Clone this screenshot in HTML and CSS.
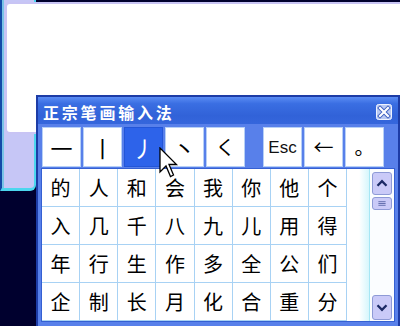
FILE: index.html
```html
<!DOCTYPE html>
<html lang="zh-CN">
<head>
<meta charset="utf-8">
<title>正宗笔画输入法</title>
<link rel="stylesheet" href="styles.css">
</head>
<body>
<div class="desk">
  <div class="back-panel"></div>
  <div class="back-sheet"></div>

  <div class="ime">
    <div class="titlebar">
      <span class="title">正宗笔画输入法</span>
      <span class="close">
        <svg width="16" height="16" viewBox="0 0 16 16">
          <rect x="0.5" y="0.5" width="15" height="15" rx="2" fill="#b9c9f2" stroke="#eef3ff"/>
          <path d="M4 4 L12 12 M12 4 L4 12" stroke="#3d5fc0" stroke-width="4" stroke-linecap="square"/>
          <path d="M4 4 L12 12 M12 4 L4 12" stroke="#ffffff" stroke-width="2.2" stroke-linecap="square"/>
        </svg>
      </span>
    </div>

    <div class="keys">
      <div class="keygroup">
        <div class="key">一</div>
        <div class="key">丨</div>
        <div class="key active">丿</div>
        <div class="key">丶</div>
        <div class="key narrow">く</div>
      </div>
      <div class="keygroup">
        <div class="key esc">Esc</div>
        <div class="key arrow">←</div>
        <div class="key stop">。</div>
      </div>
    </div>

    <div class="list">
      <div class="grid">
        <div class="cell">的</div><div class="cell">人</div><div class="cell">和</div><div class="cell">会</div><div class="cell">我</div><div class="cell">你</div><div class="cell">他</div><div class="cell">个</div>
        <div class="cell">入</div><div class="cell">几</div><div class="cell">千</div><div class="cell">八</div><div class="cell">九</div><div class="cell">儿</div><div class="cell">用</div><div class="cell">得</div>
        <div class="cell">年</div><div class="cell">行</div><div class="cell">生</div><div class="cell">作</div><div class="cell">多</div><div class="cell">全</div><div class="cell">公</div><div class="cell">们</div>
        <div class="cell">企</div><div class="cell">制</div><div class="cell">长</div><div class="cell">月</div><div class="cell">化</div><div class="cell">合</div><div class="cell">重</div><div class="cell">分</div>
      </div>
      <div class="side"></div>
      <div class="scroll">
        <div class="sbtn up">
          <svg width="20" height="21" viewBox="0 0 20 21"><path d="M5 13 L10 8 L15 13" fill="none" stroke="#1c2a66" stroke-width="2.6"/></svg>
        </div>
        <div class="thumb">
          <svg width="20" height="11" viewBox="0 0 20 11"><path d="M6 3.5 H14 M6 5.5 H14 M6 7.5 H14" stroke="#5a66a8" stroke-width="1"/></svg>
        </div>
        <div class="track"></div>
        <div class="sbtn down">
          <svg width="20" height="23" viewBox="0 0 20 23"><path d="M5 9 L10 14 L15 9" fill="none" stroke="#1c2a66" stroke-width="2.6"/></svg>
        </div>
      </div>
    </div>
  </div>

  <svg class="cursor" width="20" height="32" viewBox="0 0 20 32">
    <path d="M1 1 L1 25 L7 19 L11.5 29.5 L14.5 28 L10 17.5 L17.5 17.5 Z" fill="#ffffff" stroke="#000000" stroke-width="1.3" stroke-linejoin="miter"/>
  </svg>
</div>
</body>
</html>
```

FILE: styles.css
```css
html, body {
  margin: 0;
  padding: 0;
}

body {
  background: #00002e;
  width: 400px;
  height: 326px;
  overflow: hidden;
  font-family: "Noto Sans CJK SC", "Noto Sans", sans-serif;
}

.desk {
  position: relative;
  width: 400px;
  height: 326px;
  overflow: hidden;
}

/* window behind the IME */
.back-panel {
  position: absolute;
  left: 0;
  top: 0;
  width: 36px;
  height: 191px;
  box-sizing: border-box;
  background: #c6c6f6;
  border-left: 2px solid #134aa8;
  box-shadow: inset 2px 0 0 #78c4e6;
  border-bottom: 3px solid #4cd6ee;
  border-right: 2px solid #4cd6ee;
  border-bottom-right-radius: 6px;
}

.back-sheet {
  position: absolute;
  left: 5px;
  top: 2px;
  width: 420px;
  height: 132px;
  box-sizing: border-box;
  background: #ffffff;
  border: 2px solid #c8c4f4;
  border-radius: 5px;
}

/* IME window */
.ime {
  position: absolute;
  left: 36px;
  top: 95px;
  width: 364px;
  height: 240px;
  box-sizing: border-box;
  background: #5880ea;
  border: 2px solid #1d3ca6;
  display: flex;
  flex-direction: column;
}

.titlebar {
  height: 27px;
  box-sizing: border-box;
  padding: 2px 6px 0 5px;
  background: linear-gradient(#5a8cf4 0%, #3a6ee2 25%, #3162d8 70%, #3566dc 100%);
  display: flex;
  align-items: center;
  justify-content: space-between;
}

.title {
  color: #ffffff;
  font-size: 16px;
  font-weight: bold;
  letter-spacing: 2.8px;
  line-height: 20px;
}

.close {
  display: flex;
  width: 16px;
  height: 16px;
}

.keys {
  margin-top: 3px;
  padding-left: 4px;
  height: 40px;
  display: flex;
  gap: 18px;
}

.keygroup {
  display: flex;
  gap: 2px;
}

.key {
  width: 39px;
  height: 40px;
  box-sizing: border-box;
  background: #ffffff;
  border: 1px solid #b7d0f6;
  display: flex;
  align-items: center;
  justify-content: center;
  font-size: 22px;
  line-height: 1;
  color: #000000;
}

.key.active {
  background: #2d63ea;
  border-color: #2356d8;
  color: #ffffff;
}

.key.narrow {
  font-size: 20px;
}

.key.esc {
  font-family: "Liberation Sans", Arial, sans-serif;
  font-size: 17px;
  color: #111111;
}

.key.arrow {
  font-size: 20px;
}

.key.stop {
  font-size: 20px;
}

/* candidate list */
.list {
  margin-top: 1px;
  margin-left: 3px;
  width: 354px;
  height: 154px;
  box-sizing: border-box;
  border: 1px solid #3560d2;
  background: #ffffff;
  display: flex;
  overflow: hidden;
}

.grid {
  display: grid;
  grid-template-columns: repeat(8, 38.125px);
  grid-template-rows: repeat(4, 38px);
  flex: none;
}

.cell {
  box-sizing: border-box;
  border-right: 1px solid #a8d2f4;
  border-bottom: 1px solid #a8d2f4;
  display: flex;
  align-items: center;
  justify-content: center;
  font-size: 20px;
  line-height: 1;
  color: #000000;
}

.side {
  width: 23px;
  flex: none;
  background: linear-gradient(to right, #ffffff 0%, #ffffff 55%, #d6f6fc 100%);
  border-right: 1px solid #a6e6f4;
  box-sizing: border-box;
}

.scroll {
  width: 24px;
  flex: none;
  box-sizing: border-box;
  padding: 3px 2px 1px 2px;
  display: flex;
  flex-direction: column;
  background: #fbfdff;
}

.sbtn,
.thumb {
  box-sizing: border-box;
  background: #cacaf8;
  border: 1px solid #8e9ad6;
  border-radius: 3px;
  display: flex;
  align-items: center;
  justify-content: center;
}

.sbtn.up {
  height: 23px;
}

.thumb {
  margin-top: 2px;
  height: 13px;
}

.track {
  flex: 1;
}

.sbtn.down {
  height: 25px;
}

.cursor {
  position: absolute;
  left: 159px;
  top: 147px;
}
```
